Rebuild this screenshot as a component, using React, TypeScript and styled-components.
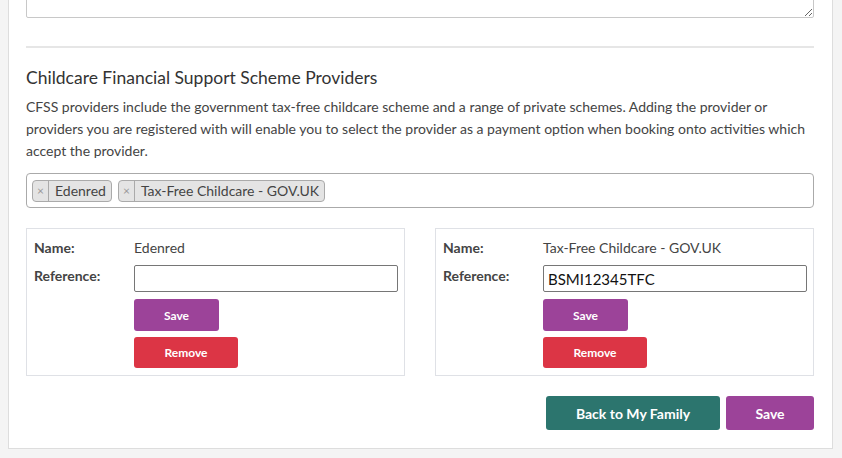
import React from "react";
import styled, { createGlobalStyle } from "styled-components";

const Global = createGlobalStyle`
  html, body { margin: 0; padding: 0; background: #f4f4f4; }
  body { font-family: Lato, "Open Sans", Arial, sans-serif; color: #444; overflow: hidden; }
  * { box-sizing: border-box; }
`;

const Panel = styled.div`
  margin: -51px 0 0 8px;
  width: 825px;
  background: #fff;
  border: 1px solid #dddddd;
  padding: 0 18px 18px 17px;
`;

const NotesArea = styled.textarea`
  display: block;
  width: 100%;
  height: 68px;
  border: 1px solid #c8c8c8;
  border-radius: 2px;
  resize: vertical;
  font-family: inherit;
`;

const Rule = styled.hr`
  border: none;
  border-top: 2px solid #e6e6e6;
  margin: 28px 0 0 0;
`;

const Heading = styled.h3`
  margin: 17px 0 0 0;
  font-size: 17.5px;
  font-weight: 400;
  line-height: 26px;
  color: #333;
`;

const Intro = styled.p`
  margin: 5px 0 0 0;
  font-size: 14px;
  line-height: 22px;
  color: #444;
`;

const TagBox = styled.div`
  margin-top: 11px;
  height: 35px;
  border: 1px solid #aaaaaa;
  border-radius: 4px;
  padding: 6px 5px 0 5px;
  display: flex;
  gap: 6px;
  align-items: flex-start;
`;

const Tag = styled.span`
  display: inline-flex;
  align-items: stretch;
  height: 22px;
  background: #e4e4e4;
  border: 1px solid #aaaaaa;
  border-radius: 4px;
  font-size: 14px;
  line-height: 20px;
  color: #444;
`;

const TagRemove = styled.span`
  width: 16px;
  border-right: 1px solid #aaaaaa;
  color: #999;
  font-size: 12px;
  text-align: center;
  line-height: 20px;
`;

const TagLabel = styled.span`
  padding: 0 5px 0 6px;
`;

const Cards = styled.div`
  margin-top: 20px;
  display: grid;
  grid-template-columns: 379px 379px;
  justify-content: space-between;
`;

const Card = styled.div`
  border: 1px solid #dfe1e6;
  padding: 9px 7px 7px 7px;
  display: grid;
  grid-template-columns: 100px 1fr;
`;

const Label = styled.div`
  font-size: 14px;
  font-weight: 700;
  color: #444;
  line-height: 20px;
`;

const Value = styled.div`
  font-size: 14px;
  color: #444;
  line-height: 20px;
`;

const RefLabel = styled(Label)`
  margin-top: 8px;
`;

const RefInput = styled.input`
  margin-top: 7px;
  width: 264px;
  height: 27px;
  border: 1px solid #767676;
  border-radius: 2px;
  padding: 0 4px;
  font-family: Lato, Arial, sans-serif;
  font-size: 15px;
  color: #111;
`;

const ButtonStack = styled.div`
  grid-column: 2;
  display: flex;
  flex-direction: column;
  align-items: flex-start;
  gap: 6px;
  margin-top: 7px;
`;

const Btn = styled.button<{ $bg: string; $w: number; $h: number; $fs?: number }>`
  width: ${(p) => p.$w}px;
  height: ${(p) => p.$h}px;
  background: ${(p) => p.$bg};
  color: #fff;
  border: none;
  border-radius: 3px;
  font-family: Lato, Arial, sans-serif;
  font-weight: 700;
  font-size: ${(p) => p.$fs ?? 12}px;
  padding: 0;
  cursor: pointer;
`;

const Footer = styled.div`
  margin-top: 20px;
  display: flex;
  justify-content: flex-end;
  gap: 6px;
`;

type Provider = { name: string; reference: string };

const providers: Provider[] = [
  { name: "Edenred", reference: "" },
  { name: "Tax-Free Childcare - GOV.UK", reference: "BSMI12345TFC" },
];

export default function App() {
  return (
    <>
      <Global />
      <Panel>
        <NotesArea />
        <Rule />
        <Heading>Childcare Financial Support Scheme Providers</Heading>
        <Intro>
          CFSS providers include the government tax-free childcare scheme and a range of private schemes. Adding the
          provider or providers you are registered with will enable you to select the provider as a payment option
          when booking onto activities which accept the provider.
        </Intro>
        <TagBox>
          {providers.map((p) => (
            <Tag key={p.name}>
              <TagRemove>×</TagRemove>
              <TagLabel>{p.name}</TagLabel>
            </Tag>
          ))}
        </TagBox>
        <Cards>
          {providers.map((p) => (
            <Card key={p.name}>
              <Label>Name:</Label>
              <Value>{p.name}</Value>
              <RefLabel>Reference:</RefLabel>
              <div>
                <RefInput defaultValue={p.reference} />
              </div>
              <ButtonStack>
                <Btn $bg="#9c4399" $w={85} $h={32}>Save</Btn>
                <Btn $bg="#dc3545" $w={104} $h={31}>Remove</Btn>
              </ButtonStack>
            </Card>
          ))}
        </Cards>
        <Footer>
          <Btn $bg="#2c756e" $w={174} $h={34} $fs={14}>Back to My Family</Btn>
          <Btn $bg="#9c4399" $w={88} $h={34} $fs={14}>Save</Btn>
        </Footer>
      </Panel>
    </>
  );
}
